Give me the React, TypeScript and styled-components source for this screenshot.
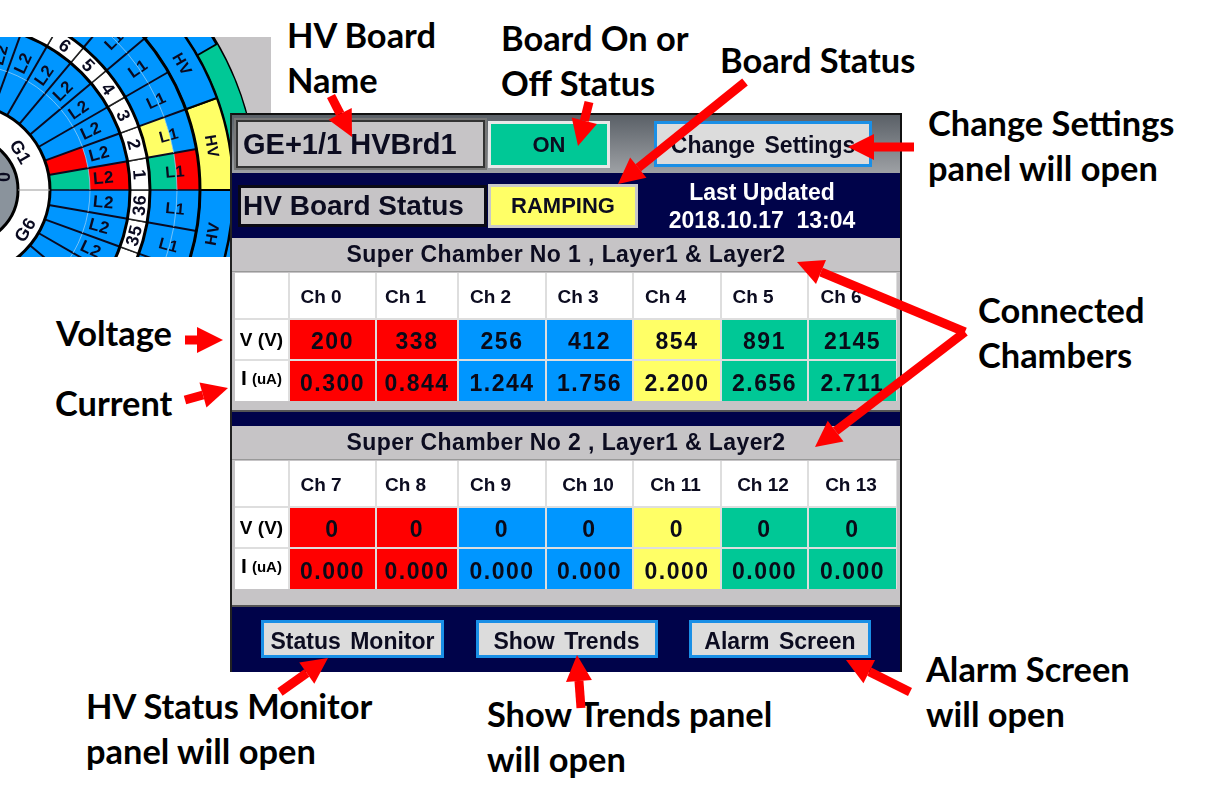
import React from "react";
import styled, { createGlobalStyle } from "styled-components";

const Global = createGlobalStyle`
  html, body { margin: 0; padding: 0; background: #fff; }
`;

const Page = styled.div`
  position: relative;
  width: 1206px;
  height: 804px;
  overflow: hidden;
  background: #fff;
  font-family: "Liberation Sans", Arial, sans-serif;
`;

const WheelSvg = styled.svg`
  position: absolute;
  left: 0;
  top: 37px;
  width: 271px;
  height: 220px;
  filter: blur(0.4px);
`;

const ArrowSvg = styled.svg`
  position: absolute;
  left: 0;
  top: 0;
  width: 1206px;
  height: 804px;
  pointer-events: none;
  z-index: 3;
`;

const Note = styled.div<{ $x: number; $y: number }>`
  position: absolute;
  left: ${(p) => p.$x}px;
  top: ${(p) => p.$y}px;
  font-family: Lato, "Open Sans", sans-serif;
  font-weight: 700;
  font-size: 34.4px;
  line-height: 45px;
  color: #000;
  white-space: pre;
  z-index: 2;
`;

const Panel = styled.div`
  position: absolute;
  left: 230px;
  top: 113px;
  width: 672px;
  height: 559px;
  box-sizing: border-box;
  display: flex;
  flex-direction: column;
  background: #00034a;
  border-top: 2px solid #111;
  border-left: 2px solid #222;
  border-right: 2px solid #111;
  color: #0c0c20;
  z-index: 1;
  filter: blur(0.4px);
`;

const TopBar = styled.div`
  height: 58px;
  flex: none;
  display: flex;
  align-items: flex-start;
  box-sizing: border-box;
  padding: 3px 28px 0 2px;
  background: linear-gradient(#5a6067, #9ea1a5);
`;

const NameBox = styled.div`
  width: 253px;
  height: 52px;
  box-sizing: border-box;
  display: flex;
  align-items: center;
  padding-left: 7px;
  background: #c6c4c6;
  border: 2px solid #777;
  outline: 2px solid #333;
  outline-offset: -4px;
  font-weight: 700;
  font-size: 29px;
`;

const StateBox = styled.div<{ $bg: string; $w: number; $h: number }>`
  width: ${(p) => p.$w}px;
  height: ${(p) => p.$h}px;
  box-sizing: border-box;
  flex: none;
  display: flex;
  align-items: center;
  justify-content: center;
  background: ${(p) => p.$bg};
  border: 3px solid #e8e8e8;
  font-weight: 700;
  font-size: 22px;
`;

const OnWrap = styled.div`
  margin-left: 1px;
  margin-top: 3px;
`;

const SettingsWrap = styled.div`
  margin-left: auto;
  margin-top: 3px;
`;

const ActionButton = styled.div<{ $w: number; $h: number; $fs: number; $top: number }>`
  width: ${(p) => p.$w}px;
  height: ${(p) => p.$h}px;
  box-sizing: border-box;
  display: flex;
  align-items: center;
  justify-content: center;
  background: #dcdcdc;
  border: 3px solid #1a8fe6;
  font-weight: 700;
  font-size: ${(p) => p.$fs}px;
  word-spacing: 3px;
  padding-top: ${(p) => p.$top}px;
`;

const StatusBar = styled.div`
  height: 65px;
  flex: none;
  display: flex;
  align-items: center;
  box-sizing: border-box;
  padding: 0 0 0 6px;
  background: #00034a;
`;

const StatusLabel = styled.div`
  width: 249px;
  height: 42px;
  box-sizing: border-box;
  display: flex;
  align-items: center;
  padding-left: 2px;
  background: #c6c4c6;
  border: 3px solid #0a0a14;
  font-weight: 700;
  font-size: 28px;
`;

const RampingBox = styled(StateBox)`
  margin-left: 1px;
  border-color: #c8c8c8;
`;

const Updated = styled.div`
  flex: 1;
  text-align: center;
  padding-right: 14px;
  color: #fff;
  font-weight: 700;
  font-size: 23px;
  line-height: 28px;
  white-space: pre;
`;

const Section = styled.div`
  flex: none;
  display: flex;
  flex-direction: column;
  background: #c6c4c6;
`;

const SectionHead = styled.div`
  height: 34px;
  flex: none;
  display: flex;
  align-items: center;
  justify-content: center;
  border-bottom: 1px solid #999;
  box-sizing: border-box;
  font-weight: 700;
  font-size: 23px;
  letter-spacing: 0.4px;
`;

const Table = styled.div`
  flex: none;
  margin: 1px 3px 0 3px;
  display: grid;
  grid-template-columns: 53px 85px 80px 86px 85px 86px 85px 87px;
  grid-template-rows: 45px 39px 40px;
  column-gap: 2px;
  row-gap: 2px;
  background: #dedede;
`;

const Corner = styled.div`
  background: #fff;
`;

const ChHead = styled.div<{ $pad: number }>`
  background: #fff;
  display: flex;
  align-items: center;
  justify-content: center;
  font-weight: 700;
  font-size: 19px;
  padding-right: ${(p) => p.$pad}px;
  padding-top: 3px;
  white-space: nowrap;
`;

const RowLabel = styled.div`
  background: #fff;
  display: flex;
  align-items: center;
  justify-content: center;
  color: #000;
  font-weight: 700;
  font-size: 19px;
  white-space: pre;
`;

const CurrentLabel = styled(RowLabel)`
  font-size: 21px;
  padding-bottom: 6px;
`;

const Unit = styled.span`
  font-size: 15px;
  margin-left: 5px;
`;

const Cell = styled.div<{ $bg: string }>`
  background: ${(p) => p.$bg};
  display: flex;
  align-items: center;
  justify-content: center;
  font-weight: 700;
  font-size: 23px;
  letter-spacing: 1.5px;
  padding-top: 4px;
  color: #0a0a18;
  white-space: nowrap;
`;

const Strip = styled.div<{ $h: number }>`
  height: ${(p) => p.$h}px;
  flex: none;
  border-bottom: 2px solid #555;
  box-sizing: border-box;
`;

const Gap = styled.div`
  height: 14px;
  flex: none;
  background: #00034a;
`;

const Footer = styled.div`
  flex: 1;
  display: flex;
  box-sizing: border-box;
  padding: 13px 29px 0 29px;
  align-items: flex-start;
  justify-content: space-between;
  background: #00034a;
`;

const RED = "#ff0000";
const BLUE = "#0096ff";
const YEL = "#ffff66";
const GRN = "#00c896";
const colours = [RED, RED, BLUE, BLUE, YEL, GRN, GRN];

type Sect = { title: string; start: number; v: string[]; i: string[]; strip: number };
const sections: Sect[] = [
  {
    title: "Super Chamber No 1 , Layer1 & Layer2",
    start: 0,
    strip: 11,
    v: ["200", "338", "256", "412", "854", "891", "2145"],
    i: ["0.300", "0.844", "1.244", "1.756", "2.200", "2.656", "2.711"],
  },
  {
    title: "Super Chamber No 2 , Layer1 & Layer2",
    start: 7,
    strip: 18,
    v: ["0", "0", "0", "0", "0", "0", "0"],
    i: ["0.000", "0.000", "0.000", "0.000", "0.000", "0.000", "0.000"],
  },
];

function ChamberTable({ s }: { s: Sect }) {
  return (
    <Table>
      <Corner />
      {s.v.map((_, k) => (
        <ChHead key={k} $pad={s.start + k > 9 ? 3 : 23}>Ch {s.start + k}</ChHead>
      ))}
      <RowLabel>V (V)</RowLabel>
      {s.v.map((t, k) => (
        <Cell key={k} $bg={colours[k]}>{t}</Cell>
      ))}
      <CurrentLabel>I<Unit>(uA)</Unit></CurrentLabel>
      {s.i.map((t, k) => (
        <Cell key={k} $bg={colours[k]}>{t}</Cell>
      ))}
    </Table>
  );
}

const CX = -36;
const CY = 190;
const pt = (r: number, a: number): [number, number] => {
  const t = (a * Math.PI) / 180;
  return [CX + r * Math.cos(t), CY - r * Math.sin(t)];
};
const sector = (r0: number, r1: number, a0: number, a1: number) => {
  const [x0, y0] = pt(r0, a0);
  const [x1, y1] = pt(r1, a0);
  const [x2, y2] = pt(r1, a1);
  const [x3, y3] = pt(r0, a1);
  return `M${x0} ${y0}L${x1} ${y1}A${r1} ${r1} 0 0 0 ${x2} ${y2}L${x3} ${y3}A${r0} ${r0} 0 0 1 ${x0} ${y0}Z`;
};

const Lab = ({ r, a, rot, size = 14, children }: { r: number; a: number; rot: number; size?: number; children: React.ReactNode }) => {
  const [x, y] = pt(r, a);
  if (x < 0 || y < 40 || y > 254 || x > 228) return null;
  return (
    <text
      x={x}
      y={y}
      transform={`rotate(${rot} ${x} ${y})`}
      textAnchor="middle"
      dominantBaseline="central"
      fontFamily="Liberation Sans, Arial, sans-serif"
      fontSize={size}
      fontWeight={700}
      letterSpacing={0.5}
      fill="#0a0a20"
    >
      {children}
    </text>
  );
};

function Wheel() {
  const angles: number[] = [];
  for (let a = -50; a < 100; a += 10) angles.push(a);
  const fillL2 = (a: number, outer: boolean) => {
    if (a === 0) return outer ? RED : GRN;
    if (a === 10 && !outer) return RED;
    return BLUE;
  };
  const fillL1 = (a: number, outer: boolean) => {
    if (a === 0) return outer ? RED : GRN;
    if (a === 10 && !outer) return YEL;
    return BLUE;
  };
  const numFor = (a: number) => (a >= 0 ? a / 10 + 1 : 37 + a / 10);
  return (
    <WheelSvg viewBox="0 37 271 220">
      <rect x="0" y="37" width="271" height="220" fill="#c6c4c6" />
      <circle cx={CX} cy={CY} r={292} fill={BLUE} stroke="#000" strokeWidth="3" />
      <path d={sector(269, 292, 0, 30)} fill={GRN} />
      <circle cx={CX} cy={CY} r={269} fill="none" stroke="#000" strokeWidth="3" />
      {[-40, -20, 0, 20, 40, 60].map((a) => (
        <path key={a} d={sector(236, 269, a, a + 20)} fill={a === 0 ? YEL : BLUE} stroke="#000" strokeWidth="2" />
      ))}
      <line x1={pt(269, 30)[0]} y1={pt(269, 30)[1]} x2={pt(292, 30)[0]} y2={pt(292, 30)[1]} stroke="#000" strokeWidth="2" />
      {angles.map((a) => (
        <g key={a}>
          <path d={sector(86, 126, a, a + 10)} fill={fillL2(a, false)} />
          <path d={sector(126, 166, a, a + 10)} fill={fillL2(a, true)} />
          <path d={sector(166, 186, a, a + 10)} fill="#fff" stroke="#222" strokeWidth="1.5" />
          <path d={sector(186, 213, a, a + 10)} fill={fillL1(a, false)} />
          <path d={sector(213, 236, a, a + 10)} fill={fillL1(a, true)} />
          {a !== 0 ? (
            <>
              <line x1={pt(86, a)[0]} y1={pt(86, a)[1]} x2={pt(166, a)[0]} y2={pt(166, a)[1]} stroke="#0a0a20" strokeWidth="2" />
              <line x1={pt(186, a)[0]} y1={pt(186, a)[1]} x2={pt(236, a)[0]} y2={pt(236, a)[1]} stroke="#0a0a20" strokeWidth="2" />
            </>
          ) : (
            <>
              <line x1={pt(86, a)[0]} y1={CY} x2={pt(166, a)[0]} y2={CY} stroke="#0a0a20" strokeWidth="1.5" />
              <line x1={pt(186, a)[0]} y1={CY} x2={pt(236, a)[0]} y2={CY} stroke="#0a0a20" strokeWidth="1.5" />
            </>
          )}
          <path d={`M${pt(126, a)[0]} ${pt(126, a)[1]}A126 126 0 0 0 ${pt(126, a + 10)[0]} ${pt(126, a + 10)[1]}`} fill="none" stroke="#a8d4f4" strokeWidth="0.7" />
          <path d={`M${pt(213, a)[0]} ${pt(213, a)[1]}A213 213 0 0 0 ${pt(213, a + 10)[0]} ${pt(213, a + 10)[1]}`} fill="none" stroke="#a8d4f4" strokeWidth="0.7" />
          <Lab r={140} a={a + 5} rot={-(a + 5)} size={17}>L2</Lab>
          <Lab r={212} a={a + 5} rot={-(a + 5)} size={16}>L1</Lab>
          <Lab r={176} a={a + 5} rot={a >= 0 ? 90 - (a + 5) : -90 - (a + 5)} size={18}>{numFor(a)}</Lab>
        </g>
      ))}
      {[-30, -10, 10, 30, 50].map((a) => (
        <Lab key={a} r={252} a={a} rot={a > 0 ? 90 - a : -90 - a} size={16}>HV</Lab>
      ))}
      <circle cx={CX} cy={CY} r={86} fill="#fff" stroke="#000" strokeWidth="3" />
      <circle cx={CX} cy={CY} r={54} fill="#8a939c" stroke="#000" strokeWidth="3" />
      <line x1={pt(54, 0)[0]} y1={CY} x2={pt(86, 0)[0]} y2={CY} stroke="#999" strokeWidth="1" />
      <circle cx={CX} cy={CY} r={166} fill="none" stroke="#000" strokeWidth="3" />
      <circle cx={CX} cy={CY} r={186} fill="none" stroke="#000" strokeWidth="3" />
      <circle cx={CX} cy={CY} r={236} fill="none" stroke="#000" strokeWidth="3" />
      <Lab r={68} a={34} rot={60} size={18}>G1</Lab>
      <Lab r={73} a={-33} rot={-58} size={18}>G6</Lab>
      <Lab r={41} a={18} rot={90} size={18}>0</Lab>
    </WheelSvg>
  );
}

function Arrow({ x1, y1, x2, y2, w = 9, hl = 26, hw = 13 }: { x1: number; y1: number; x2: number; y2: number; w?: number; hl?: number; hw?: number }) {
  const dx = x2 - x1;
  const dy = y2 - y1;
  const len = Math.hypot(dx, dy);
  const ux = dx / len;
  const uy = dy / len;
  const bx = x2 - ux * hl;
  const by = y2 - uy * hl;
  return (
    <g>
      <line x1={x1} y1={y1} x2={bx} y2={by} stroke="#ff0000" strokeWidth={w} />
      <polygon
        points={`${x2},${y2} ${bx - uy * hw},${by + ux * hw} ${bx + uy * hw},${by - ux * hw}`}
        fill="#ff0000"
      />
    </g>
  );
}

const arrows = [
  [331, 96, 352, 137],
  [589, 102, 578, 146],
  [745, 82, 618, 184],
  [914, 147, 848, 147],
  [965, 332, 797, 262],
  [965, 332, 815, 447],
  [185, 340, 223, 340],
  [185, 400, 228, 388],
  [280, 692, 328, 658],
  [581, 708, 577, 655],
  [910, 692, 846, 660],
];

const notes: [number, number, string][] = [
  [287, 12, "HV Board\nName"],
  [501, 15, "Board On or\nOff Status"],
  [720, 37, "Board Status"],
  [928, 100, "Change Settings\npanel will open"],
  [978, 287, "Connected\nChambers"],
  [56, 310, "Voltage"],
  [55, 380, "Current"],
  [86, 683, "HV Status Monitor\npanel will open"],
  [487, 691, "Show Trends panel\nwill open"],
  [926, 646, "Alarm Screen\nwill open"],
];

export default function App() {
  return (
    <Page>
      <Global />
      <Wheel />
      <Panel>
        <TopBar>
          <NameBox>GE+1/1 HVBrd1</NameBox>
          <OnWrap>
            <StateBox $bg={GRN} $w={122} $h={47}>ON</StateBox>
          </OnWrap>
          <SettingsWrap>
            <ActionButton $w={218} $h={46} $fs={23} $top={2}>Change Settings</ActionButton>
          </SettingsWrap>
        </TopBar>
        <StatusBar>
          <StatusLabel>HV Board Status</StatusLabel>
          <RampingBox $bg={YEL} $w={150} $h={44}>RAMPING</RampingBox>
          <Updated>{"Last Updated\n2018.10.17  13:04"}</Updated>
        </StatusBar>
        {sections.map((s, n) => (
          <React.Fragment key={s.title}>
            <Section>
              <SectionHead>{s.title}</SectionHead>
              <ChamberTable s={s} />
              <Strip $h={s.strip} />
            </Section>
            {n === 0 ? <Gap /> : null}
          </React.Fragment>
        ))}
        <Footer>
          <ActionButton $w={183} $h={38} $fs={23} $top={4}>Status Monitor</ActionButton>
          <ActionButton $w={182} $h={38} $fs={23} $top={4}>Show Trends</ActionButton>
          <ActionButton $w={182} $h={38} $fs={23} $top={4}>Alarm Screen</ActionButton>
        </Footer>
      </Panel>
      {notes.map(([x, y, t]) => (
        <Note key={t} $x={x} $y={y}>{t}</Note>
      ))}
      <ArrowSvg viewBox="0 0 1206 804">
        {arrows.map(([a, b, c, d], i) => (
          <Arrow key={i} x1={a} y1={b} x2={c} y2={d} />
        ))}
      </ArrowSvg>
    </Page>
  );
}
